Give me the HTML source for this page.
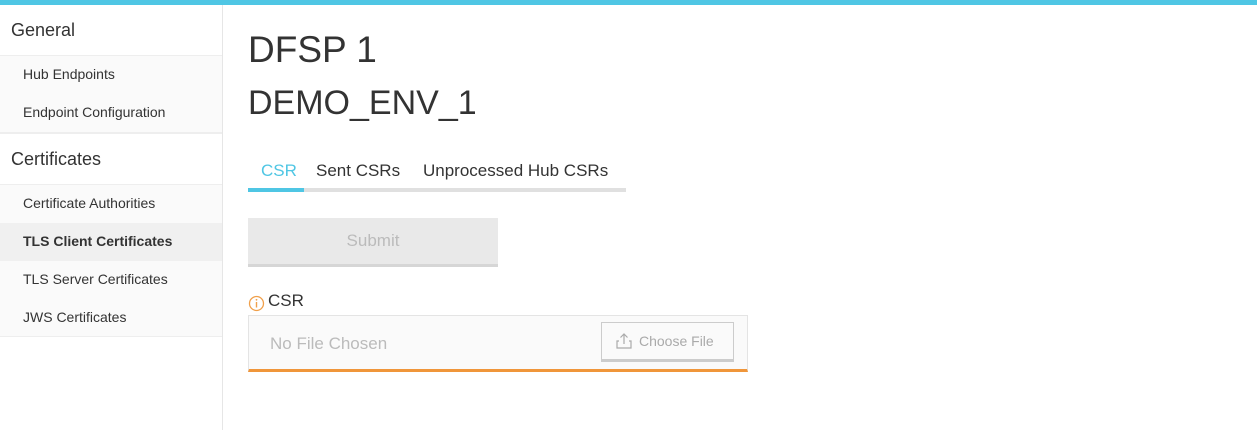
<!DOCTYPE html>
<html><head><style>
*{margin:0;padding:0;box-sizing:border-box}
body{width:1257px;height:430px;overflow:hidden;background:#fff;font-family:"Liberation Sans","DejaVu Sans",sans-serif;color:#333;position:relative}
.top{position:absolute;left:0;top:0;width:1257px;height:5px;background:#4fc6e4}
.side{position:absolute;left:0;top:5px;width:223px;height:425px;border-right:1px solid #e6e6e6}
.h{height:51px;line-height:50px;padding-left:11px;font-size:18px;color:#333;border-bottom:1px solid #eee}
.i{height:38px;line-height:37px;padding-left:23px;font-size:14px;background:#fafafa;color:#333}
.sep{height:2px;background:#eee}
.a{background:#f0f0f0;font-weight:bold}
.abs{position:absolute}
</style></head><body>
<div class="top"></div>
<div class="side">
<div class="h">General</div>
<div class="i">Hub Endpoints</div>
<div class="i">Endpoint Configuration</div>
<div class="sep"></div>
<div class="h">Certificates</div>
<div class="i">Certificate Authorities</div>
<div class="i a">TLS Client Certificates</div>
<div class="i">TLS Server Certificates</div>
<div class="i" style="border-bottom:1px solid #eee">JWS Certificates</div>
</div>
<div class="abs" style="left:248px;top:29px;font-size:37px;color:#333">DFSP 1</div>
<div class="abs" style="left:248px;top:84px;font-size:34px;color:#333">DEMO_ENV_1</div>
<div class="abs" style="left:261px;top:161px;font-size:17px;color:#4fc6e4">CSR</div>
<div class="abs" style="left:316px;top:161px;font-size:17px">Sent CSRs</div>
<div class="abs" style="left:423px;top:161px;font-size:17px">Unprocessed Hub CSRs</div>
<div class="abs" style="left:248px;top:188px;width:378px;height:4px;background:#e0e0e0"></div>
<div class="abs" style="left:248px;top:188px;width:56px;height:4px;background:#4fc6e4"></div>
<div class="abs" style="left:248px;top:218px;width:250px;height:49px;background:#e9e9e9;border-bottom:3px solid #d6d6d6;text-align:center;line-height:46px;font-size:17px;color:#bbb">Submit</div>
<svg class="abs" style="left:248px;top:295px" width="17" height="17"><circle cx="8.5" cy="8.5" r="7" fill="none" stroke="#f0a04b" stroke-width="1.3"/><line x1="8.5" y1="7" x2="8.5" y2="12.5" stroke="#f0a04b" stroke-width="1.4"/><circle cx="8.5" cy="4.8" r="0.9" fill="#f0a04b"/></svg>
<div class="abs" style="left:268px;top:291px;font-size:17px;color:#333">CSR</div>
<div class="abs" style="left:248px;top:315px;width:500px;height:57px;background:#fafafa;border:1px solid #e4e4e4;border-bottom:3px solid #f0963a"></div>
<div class="abs" style="left:270px;top:334px;font-size:17px;color:#bbb">No File Chosen</div>
<div class="abs" style="left:601px;top:322px;width:133px;height:40px;border:1px solid #ccc;border-bottom:3px solid #ccc;background:#fafafa;font-size:14px;color:#aaa;line-height:37px;padding-left:37px">Choose File</div>
<svg class="abs" style="left:614px;top:332px" width="20" height="18"><path d="M5 9H3v7h14V9h-2M10 12V2M6.5 5.5L10 2l3.5 3.5" fill="none" stroke="#aaa" stroke-width="1.2"/></svg>
</body></html>
